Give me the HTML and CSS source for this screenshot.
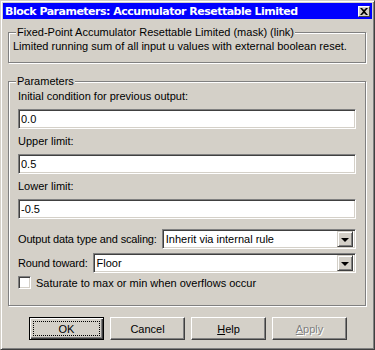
FILE: index.html
```html
<!DOCTYPE html>
<html lang="en">
<head>
    <meta charset="UTF-8">
    <title>Block Parameters: Accumulator Resettable Limited</title>
    <link rel="stylesheet" href="styles.css">
</head>
<body>

    <div class="window">
        <!-- Barre de titre -->
        <div class="titlebar">
            <span class="title">Block Parameters: Accumulator Resettable Limited</span>
            <span class="close-btn">
                <svg width="8" height="7" viewBox="0 0 8 7">
                    <path d="M0 0h2l2 2 2-2h2L5 3.5 8 7H6L4 5 2 7H0l3-3.5z" fill="#000"/>
                </svg>
            </span>
        </div>

        <!-- Description du bloc -->
        <fieldset class="group group-desc">
            <legend>Fixed-Point Accumulator Resettable Limited (mask) (link)</legend>
            <p class="desc">Limited running sum of all input u values with external boolean reset.</p>
        </fieldset>

        <!-- Parametres -->
        <fieldset class="group group-params">
            <legend>Parameters</legend>

            <label class="field-label">Initial condition for previous output:</label>
            <input type="text" class="edit" value="0.0">

            <label class="field-label">Upper limit:</label>
            <input type="text" class="edit" value="0.5">

            <label class="field-label">Lower limit:</label>
            <input type="text" class="edit" value="-0.5">

            <div class="combo-row first">
                <span class="combo-label">Output data type and scaling:</span>
                <div class="combo">
                    <span class="combo-value">Inherit via internal rule</span>
                    <span class="combo-arrow"><i></i></span>
                </div>
            </div>

            <div class="combo-row">
                <span class="combo-label">Round toward:</span>
                <div class="combo">
                    <span class="combo-value">Floor</span>
                    <span class="combo-arrow"><i></i></span>
                </div>
            </div>

            <div class="check-row">
                <span class="checkbox"></span>
                <span>Saturate to max or min when overflows occur</span>
            </div>
        </fieldset>

        <!-- Boutons -->
        <div class="buttons">
            <button class="btn default"><span class="focus">OK</span></button>
            <button class="btn"><span>Cancel</span></button>
            <button class="btn"><span><u>H</u>elp</span></button>
            <button class="btn disabled"><span><u>A</u>pply</span></button>
        </div>
    </div>

</body>
</html>
```

FILE: styles.css
```css
body {
    margin: 0;
    background-color: #d4d0c8;
    font-family: "Liberation Sans", Arial, sans-serif;
    font-size: 11px;
    color: #000;
}

.window {
    width: 375px;
    height: 350px;
    box-sizing: border-box;
    background-color: #d4d0c8;
    border: 1px solid;
    border-color: #d4d0c8 #404040 #404040 #d4d0c8;
    box-shadow: inset 1px 1px 0 #fff, inset -1px -1px 0 #808080;
    padding: 2px;
}

.titlebar {
    height: 16px;
    background-color: #0000ff;
    display: flex;
    align-items: center;
    justify-content: space-between;
    padding: 0 2px 0 2px;
}

.title {
    color: #fff;
    font-weight: bold;
    font-size: 11px;
    font-family: "DejaVu Sans", Tahoma, sans-serif;
    letter-spacing: -0.5px;
}

.close-btn {
    width: 12px;
    height: 11px;
    box-sizing: border-box;
    background-color: #d4d0c8;
    border: 1px solid;
    border-color: #fff #404040 #404040 #fff;
    display: flex;
    align-items: center;
    justify-content: center;
}

.group {
    margin: 0 6px 0 5px;
    border: 1px solid #808080;
    box-shadow: inset 1px 1px 0 #fff, 1px 1px 0 #fff;
    min-inline-size: auto;
}

.group legend {
    background-color: #d4d0c8;
    padding: 0 1px;
    line-height: 13px;
}

.group-desc {
    margin-top: 7px;
    padding: 1px 4px 9px 4px;
}

.group-desc legend {
    margin-left: 3px;
}

.desc {
    margin: 0;
    line-height: 13px;
}

.group-params {
    margin-top: 12px;
    padding: 2px 9px 16px 9px;
}

.group-params legend {
    margin-left: -2px;
}

.field-label {
    display: block;
    line-height: 13px;
    margin-top: 6px;
}

.field-label:first-of-type {
    margin-top: 0;
}

.edit {
    display: block;
    width: 100%;
    height: 20px;
    box-sizing: border-box;
    margin: 6px 0 0 0;
    padding: 0 2px;
    font: inherit;
    background-color: #fff;
    border: 1px solid;
    border-color: #808080 #fff #fff #808080;
    box-shadow: inset 1px 1px 0 #404040, inset -1px -1px 0 #d4d0c8;
    outline: none;
}

.combo-row {
    display: flex;
    align-items: center;
    margin-top: 4px;
}

.combo-row.first {
    margin-top: 10px;
}

.combo-label {
    margin-right: 5px;
    white-space: nowrap;
    letter-spacing: -0.15px;
}

.combo {
    flex: 1;
    height: 20px;
    box-sizing: border-box;
    display: flex;
    align-items: center;
    background-color: #fff;
    border: 1px solid;
    border-color: #808080 #fff #fff #808080;
    box-shadow: inset 1px 1px 0 #404040, inset -1px -1px 0 #d4d0c8;
    padding: 2px 2px 2px 3px;
}

.combo-value {
    flex: 1;
}

.combo-arrow {
    width: 16px;
    height: 16px;
    box-sizing: border-box;
    background-color: #d4d0c8;
    border: 1px solid;
    border-color: #d4d0c8 #404040 #404040 #d4d0c8;
    box-shadow: inset 1px 1px 0 #fff, inset -1px -1px 0 #808080;
    display: flex;
    align-items: center;
    justify-content: center;
}

.combo-arrow i {
    width: 0;
    height: 0;
    border-left: 4px solid transparent;
    border-right: 4px solid transparent;
    border-top: 4px solid #000;
    margin-top: 1px;
}

.check-row {
    display: flex;
    align-items: center;
    margin-top: 3px;
}

.checkbox {
    width: 13px;
    height: 13px;
    box-sizing: border-box;
    background-color: #fff;
    border: 1px solid;
    border-color: #808080 #fff #fff #808080;
    box-shadow: inset 1px 1px 0 #404040, inset -1px -1px 0 #d4d0c8;
    margin-right: 5px;
}

.buttons {
    display: flex;
    justify-content: center;
    gap: 6px;
    margin-top: 11px;
    padding-left: 1px;
}

.btn {
    width: 75px;
    height: 23px;
    box-sizing: border-box;
    padding: 0;
    font: inherit;
    color: #000;
    background-color: #d4d0c8;
    border: 1px solid;
    border-color: #fff #404040 #404040 #fff;
    box-shadow: inset -1px -1px 0 #808080;
    display: flex;
    align-items: center;
    justify-content: center;
}

.btn.default {
    border: 1px solid #000;
    box-shadow: inset 1px 1px 0 #fff, inset -1px -1px 0 #404040, inset -2px -2px 0 #808080;
    padding: 3px;
}

.btn .focus {
    flex: 1;
    align-self: stretch;
    border: 1px dotted #000;
    display: flex;
    align-items: center;
    justify-content: center;
}

.btn.disabled {
    color: #808080;
    text-shadow: 1px 1px 0 #fff;
}
```
